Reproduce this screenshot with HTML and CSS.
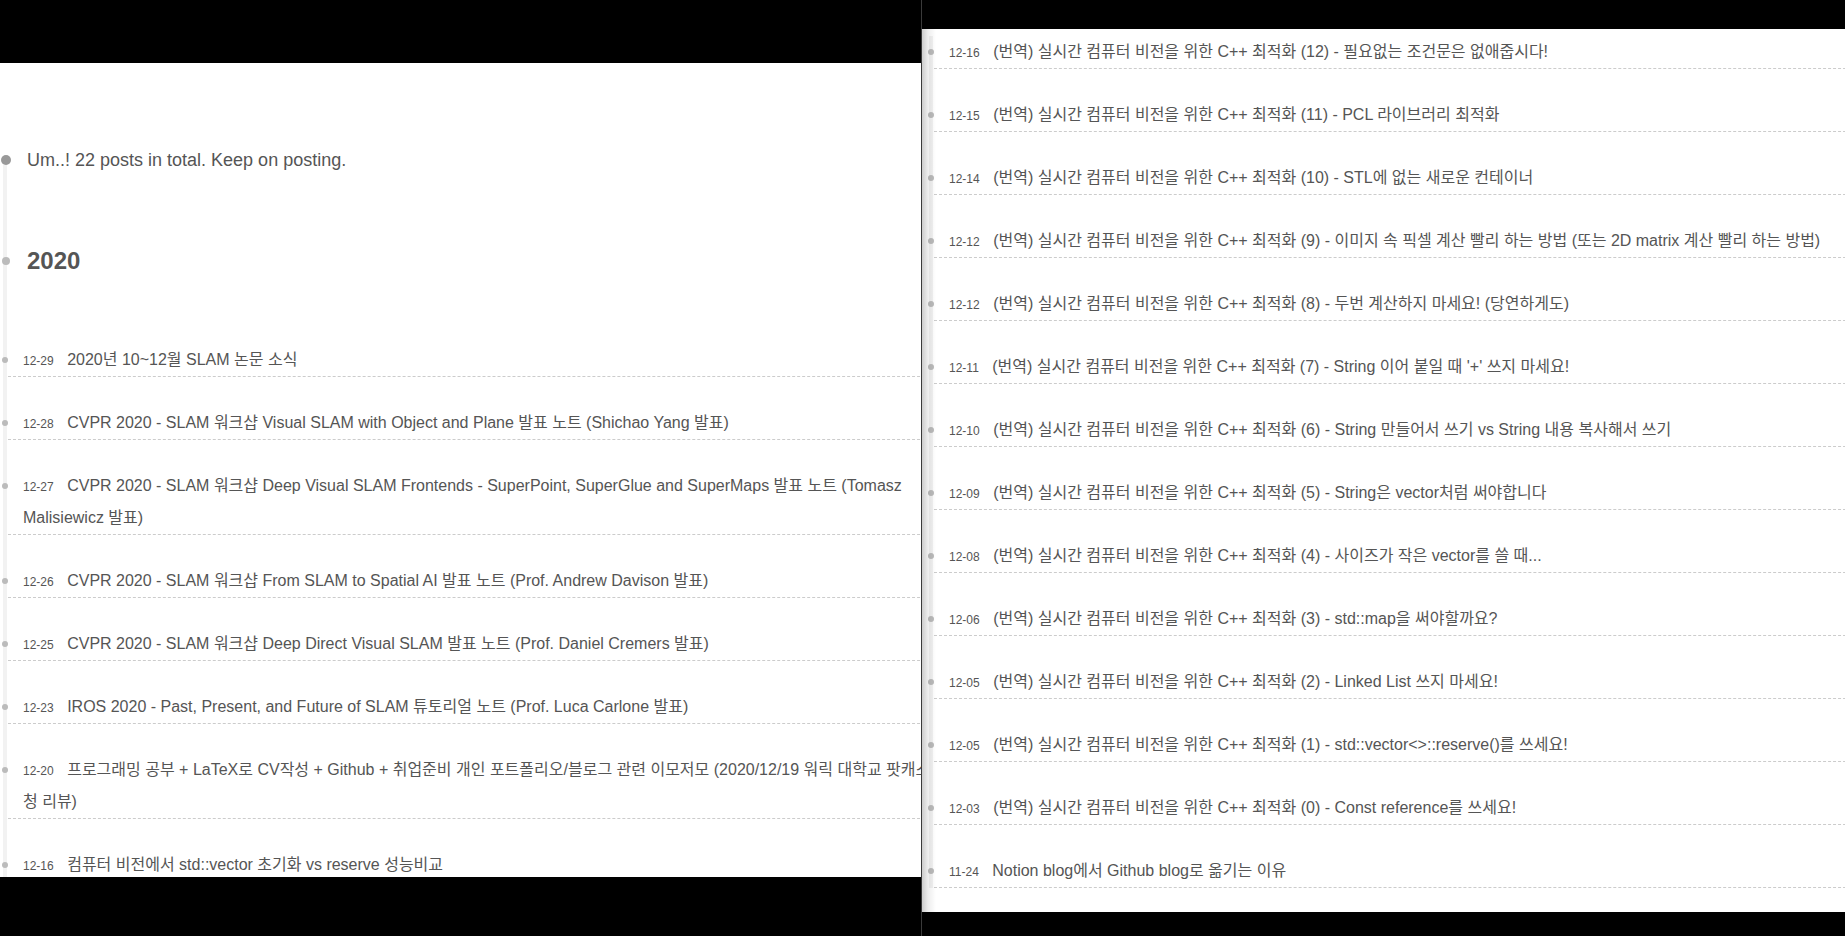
FILE: index.html
```html
<!DOCTYPE html>
<html lang="ko">
<head>
    <meta charset="UTF-8">
    <meta name="viewport" content="width=device-width, initial-scale=1.0">
    <title>Archives</title>
    <link rel="stylesheet" href="styles.css">
</head>
<body>
    <div class="screens">
        <section class="screen screen-left">
            <div class="timeline">
                <div class="archive-title">Um..! 22 posts in total. Keep on posting.</div>
                <div class="year">2020</div>

                <article class="post">
                    <span class="post-date">12-29</span>
                    <a class="post-title" href="#">2020년 10~12월 SLAM 논문 소식</a>
                </article>
                <article class="post">
                    <span class="post-date">12-28</span>
                    <a class="post-title" href="#">CVPR 2020 - SLAM 워크샵 Visual SLAM with Object and Plane 발표 노트 (Shichao Yang 발표)</a>
                </article>
                <article class="post">
                    <span class="post-date">12-27</span>
                    <a class="post-title" href="#">CVPR 2020 - SLAM 워크샵 Deep Visual SLAM Frontends - SuperPoint, SuperGlue and SuperMaps 발표 노트 (Tomasz Malisiewicz 발표)</a>
                </article>
                <article class="post">
                    <span class="post-date">12-26</span>
                    <a class="post-title" href="#">CVPR 2020 - SLAM 워크샵 From SLAM to Spatial AI 발표 노트 (Prof. Andrew Davison 발표)</a>
                </article>
                <article class="post">
                    <span class="post-date">12-25</span>
                    <a class="post-title" href="#">CVPR 2020 - SLAM 워크샵 Deep Direct Visual SLAM 발표 노트 (Prof. Daniel Cremers 발표)</a>
                </article>
                <article class="post">
                    <span class="post-date">12-23</span>
                    <a class="post-title" href="#">IROS 2020 - Past, Present, and Future of SLAM 튜토리얼 노트 (Prof. Luca Carlone 발표)</a>
                </article>
                <article class="post">
                    <span class="post-date">12-20</span>
                    <a class="post-title" href="#">프로그래밍 공부 + LaTeX로 CV작성 + Github + 취업준비 개인 포트폴리오/블로그 관련 이모저모 (2020/12/19 워릭 대학교 팟캐스트 방청 리뷰)</a>
                </article>
                <article class="post">
                    <span class="post-date">12-16</span>
                    <a class="post-title" href="#">컴퓨터 비전에서 std::vector 초기화 vs reserve 성능비교</a>
                </article>
            </div>
        </section>

        <div class="divider"></div>

        <section class="screen screen-right">
            <div class="timeline timeline-more">
                <article class="post">
                    <span class="post-date">12-16</span>
                    <a class="post-title" href="#">(번역) 실시간 컴퓨터 비전을 위한 C++ 최적화 (12) - 필요없는 조건문은 없애줍시다!</a>
                </article>
                <article class="post">
                    <span class="post-date">12-15</span>
                    <a class="post-title" href="#">(번역) 실시간 컴퓨터 비전을 위한 C++ 최적화 (11) - PCL 라이브러리 최적화</a>
                </article>
                <article class="post">
                    <span class="post-date">12-14</span>
                    <a class="post-title" href="#">(번역) 실시간 컴퓨터 비전을 위한 C++ 최적화 (10) - STL에 없는 새로운 컨테이너</a>
                </article>
                <article class="post">
                    <span class="post-date">12-12</span>
                    <a class="post-title" href="#">(번역) 실시간 컴퓨터 비전을 위한 C++ 최적화 (9) - 이미지 속 픽셀 계산 빨리 하는 방법 (또는 2D matrix 계산 빨리 하는 방법)</a>
                </article>
                <article class="post">
                    <span class="post-date">12-12</span>
                    <a class="post-title" href="#">(번역) 실시간 컴퓨터 비전을 위한 C++ 최적화 (8) - 두번 계산하지 마세요! (당연하게도)</a>
                </article>
                <article class="post">
                    <span class="post-date">12-11</span>
                    <a class="post-title" href="#">(번역) 실시간 컴퓨터 비전을 위한 C++ 최적화 (7) - String 이어 붙일 때 '+' 쓰지 마세요!</a>
                </article>
                <article class="post">
                    <span class="post-date">12-10</span>
                    <a class="post-title" href="#">(번역) 실시간 컴퓨터 비전을 위한 C++ 최적화 (6) - String 만들어서 쓰기 vs String 내용 복사해서 쓰기</a>
                </article>
                <article class="post">
                    <span class="post-date">12-09</span>
                    <a class="post-title" href="#">(번역) 실시간 컴퓨터 비전을 위한 C++ 최적화 (5) - String은 vector처럼 써야합니다</a>
                </article>
                <article class="post">
                    <span class="post-date">12-08</span>
                    <a class="post-title" href="#">(번역) 실시간 컴퓨터 비전을 위한 C++ 최적화 (4) - 사이즈가 작은 vector를 쓸 때...</a>
                </article>
                <article class="post">
                    <span class="post-date">12-06</span>
                    <a class="post-title" href="#">(번역) 실시간 컴퓨터 비전을 위한 C++ 최적화 (3) - std::map을 써야할까요?</a>
                </article>
                <article class="post">
                    <span class="post-date">12-05</span>
                    <a class="post-title" href="#">(번역) 실시간 컴퓨터 비전을 위한 C++ 최적화 (2) - Linked List 쓰지 마세요!</a>
                </article>
                <article class="post">
                    <span class="post-date">12-05</span>
                    <a class="post-title" href="#">(번역) 실시간 컴퓨터 비전을 위한 C++ 최적화 (1) - std::vector&lt;&gt;::reserve()를 쓰세요!</a>
                </article>
                <article class="post">
                    <span class="post-date">12-03</span>
                    <a class="post-title" href="#">(번역) 실시간 컴퓨터 비전을 위한 C++ 최적화 (0) - Const reference를 쓰세요!</a>
                </article>
                <article class="post">
                    <span class="post-date">11-24</span>
                    <a class="post-title" href="#">Notion blog에서 Github blog로 옮기는 이유</a>
                </article>
            </div>
        </section>
    </div>
</body>
</html>
```

FILE: styles.css
```css
* {
    margin: 0;
    padding: 0;
    box-sizing: border-box;
}

body {
    font-family: "Liberation Sans", "Noto Sans CJK KR", sans-serif;
    background: #000;
    color: #555;
    overflow: hidden;
}

a {
    color: inherit;
    text-decoration: none;
}

.screens {
    display: flex;
    height: 936px;
}

.screen {
    position: relative;
    background: #fff;
    overflow: hidden;
}

.screen-left {
    flex: none;
    width: 921px;
    height: 814px;
    margin-top: 63px;
    padding-top: 79px;
}

.divider {
    flex: none;
    width: 1px;
    background: #3a3a3a;
}

.screen-right {
    flex: 1;
    min-width: 0;
    height: 883px;
    margin-top: 29px;
    padding: 7px 0 0 4px;
}

/* soft edge shadow of the second window */
.screen-right::after {
    content: '';
    position: absolute;
    top: 0;
    left: 0;
    bottom: 0;
    width: 14px;
    background: linear-gradient(to right, rgba(0, 0, 0, 0.2), rgba(0, 0, 0, 0.07) 6px, rgba(0, 0, 0, 0));
    pointer-events: none;
}

/* timeline */
.timeline {
    position: relative;
    width: 970px;
    background: linear-gradient(#f2f2f2, #f2f2f2) no-repeat 3px 18px / 4px 100%;
}

.timeline-more {
    background-position: 3px 0;
}

.archive-title,
.year,
.post {
    position: relative;
}

.archive-title::before,
.year::before,
.post::before {
    content: '';
    position: absolute;
    border-radius: 50%;
}

.archive-title {
    padding-left: 27px;
    font-size: 18px;
    line-height: 36px;
}

.archive-title::before {
    left: 1px;
    top: 13px;
    width: 10px;
    height: 10px;
    background: #999;
}

.year {
    margin: 60px 0;
    padding-left: 27px;
    font-size: 24px;
    font-weight: bold;
    line-height: 46px;
}

.year::before {
    left: 2px;
    top: 19px;
    width: 8px;
    height: 8px;
    background: #bbb;
}

.post {
    margin: 30px 0 0 8px;
    padding-left: 15px;
    border-bottom: 1px dashed #ccc;
    font-size: 16px;
    line-height: 32px;
}

.post::before {
    left: -6px;
    top: 13px;
    width: 6px;
    height: 6px;
    background: #bbb;
}

.timeline-more .post:first-child {
    margin-top: 0;
}

.post-date {
    font-size: 12px;
    line-height: 1;
    margin-right: 9px;
}
```
